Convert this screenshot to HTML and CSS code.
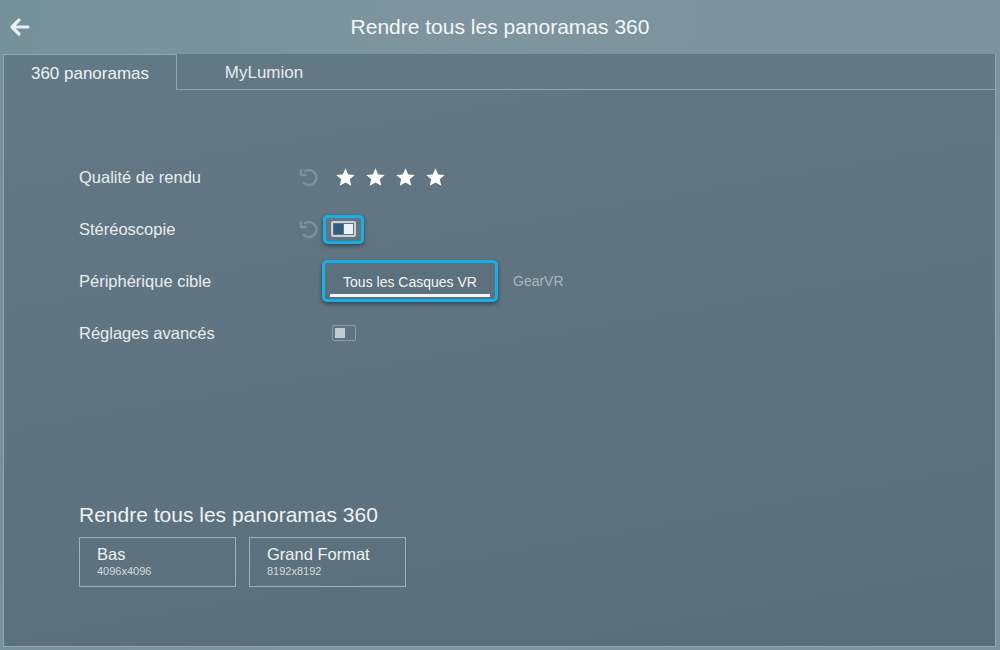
FILE: index.html
```html
<!DOCTYPE html>
<html lang="fr">
<head>
    <meta charset="UTF-8">
    <title>Rendre tous les panoramas 360</title>
    <link rel="stylesheet" href="styles.css">
</head>
<body>
    <header class="topbar">
        <button class="back" type="button" aria-label="Retour">
            <svg width="22" height="20" viewBox="0 0 22 20">
                <path d="M20 10H4M11 3L4 10L11 17" fill="none" stroke="#e9eef0" stroke-width="3.2" stroke-linecap="round" stroke-linejoin="round"/>
            </svg>
        </button>
        <h1>Rendre tous les panoramas 360</h1>
    </header>

    <nav class="tabs">
        <div class="tab active">360 panoramas</div>
        <div class="tab">MyLumion</div>
        <div class="tab-fill"></div>
    </nav>

    <main class="panel">
        <div class="settings">
            <div class="row">
                <span class="label">Qualité de rendu</span>
                <span class="reset">
                    <svg width="22" height="22" viewBox="0 0 24 24"><path d="M6.6 6.4A8.2 8.2 0 1 1 5.6 17.8" fill="none" stroke="#7d909b" stroke-width="2.8"/><path d="M3.2 3.6V9.8H9.4" fill="none" stroke="#7d909b" stroke-width="2.8"/></svg>
                </span>
                <div class="stars">
                    <svg class="star" viewBox="0 0 24 24"><path d="M12 1.5l3.1 7 7.4.6-5.6 4.9 1.7 7.5L12 17.6l-6.6 3.9 1.7-7.5L1.5 9.1l7.4-.6z"/></svg>
                    <svg class="star" viewBox="0 0 24 24"><path d="M12 1.5l3.1 7 7.4.6-5.6 4.9 1.7 7.5L12 17.6l-6.6 3.9 1.7-7.5L1.5 9.1l7.4-.6z"/></svg>
                    <svg class="star" viewBox="0 0 24 24"><path d="M12 1.5l3.1 7 7.4.6-5.6 4.9 1.7 7.5L12 17.6l-6.6 3.9 1.7-7.5L1.5 9.1l7.4-.6z"/></svg>
                    <svg class="star" viewBox="0 0 24 24"><path d="M12 1.5l3.1 7 7.4.6-5.6 4.9 1.7 7.5L12 17.6l-6.6 3.9 1.7-7.5L1.5 9.1l7.4-.6z"/></svg>
                </div>
            </div>

            <div class="row">
                <span class="label">Stéréoscopie</span>
                <span class="reset">
                    <svg width="22" height="22" viewBox="0 0 24 24"><path d="M6.6 6.4A8.2 8.2 0 1 1 5.6 17.8" fill="none" stroke="#7d909b" stroke-width="2.8"/><path d="M3.2 3.6V9.8H9.4" fill="none" stroke="#7d909b" stroke-width="2.8"/></svg>
                </span>
                <div class="focus toggle-focus">
                    <div class="toggle on">
                        <span class="half dark"></span>
                        <span class="half light"></span>
                    </div>
                </div>
            </div>

            <div class="row">
                <span class="label">Périphérique cible</span>
                <span class="reset"></span>
                <div class="focus choice-focus">
                    <span class="choice">Tous les Casques VR</span>
                </div>
                <span class="choice-other">GearVR</span>
            </div>

            <div class="row">
                <span class="label">Réglages avancés</span>
                <span class="reset"></span>
                <div class="toggle off">
                    <span class="knob"></span>
                </div>
            </div>
        </div>

        <section class="render">
            <h2>Rendre tous les panoramas 360</h2>
            <div class="render-buttons">
                <button class="render-btn" type="button">
                    <span class="render-title">Bas</span>
                    <span class="render-size">4096x4096</span>
                </button>
                <button class="render-btn" type="button">
                    <span class="render-title">Grand Format</span>
                    <span class="render-size">8192x8192</span>
                </button>
            </div>
        </section>
    </main>
</body>
</html>
```

FILE: styles.css
```css
body {
    margin: 0;
    height: 650px;
    overflow: hidden;
    font-family: "Liberation Sans", Arial, sans-serif;
    color: #eef2f3;
    background: linear-gradient(100deg, #76909a 0%, #7e959f 40%, #7c939e 100%);
}
.topbar {
    height: 54px;
    display: flex;
    align-items: center;
    justify-content: center;
    position: relative;
}
.topbar h1 {
    margin: 0;
    font-size: 21px;
    font-weight: normal;
    color: #f4f7f8;
}
.back {
    position: absolute;
    left: 8px;
    top: 17px;
    background: none;
    border: none;
    padding: 0;
    display: flex;
}
.tabs {
    display: flex;
    height: 36px;
    margin: 0 4px 0 3px;
    box-sizing: border-box;
}
.tab {
    width: 174px;
    box-sizing: border-box;
    display: flex;
    align-items: center;
    justify-content: center;
    font-size: 17px;
    padding-top: 2px;
    color: #e6ebee;
    background: #627884;
    border-bottom: 1px solid #93a6b0;
}
.tab.active {
    border: 1px solid #93a6b0;
    border-bottom: none;
    color: #eef2f4;
}
.tab-fill {
    flex: 1;
    background: #627884;
    border-bottom: 1px solid #93a6b0;
    border-right: 1px solid #93a6b0;
}
.panel {
    height: 557px;
    margin: 0 4px 0 3px;
    box-sizing: border-box;
    border: 1px solid #93a6b0;
    border-top: none;
    padding: 61px 0 0 75px;
    background: linear-gradient(170deg, #637884 0%, #5e737f 55%, #5a6e7a 100%);
}
.row {
    height: 52px;
    display: flex;
    align-items: center;
}
.label {
    width: 221px;
    font-size: 16.5px;
    color: #e8edef;
}
.reset {
    width: 22px;
    display: flex;
    align-items: center;
    margin-left: -2px;
    margin-right: 2px;
}
.stars {
    display: flex;
    gap: 9px;
    margin-left: 13px;
}
.star {
    width: 21px;
    height: 21px;
    fill: #ffffff;
}
.focus {
    border: 3px solid #18aee6;
    border-radius: 5px;
    box-shadow: 0 2px 4px rgba(20, 35, 45, 0.6);
    box-sizing: border-box;
    display: flex;
    align-items: center;
}
.toggle-focus {
    width: 41px;
    height: 29px;
    padding-left: 5px;
    margin-left: 1px;
}
.toggle {
    width: 25px;
    height: 16px;
    box-sizing: border-box;
    border-radius: 2px;
    display: flex;
    padding: 1px;
    gap: 1px;
}
.toggle.on {
    border: 2px solid #c9d2d6;
}
.half {
    flex: 1;
}
.half.dark {
    background: #2d5f85;
}
.half.light {
    background: #eef2f4;
}
.toggle.off {
    margin-left: 10px;
    width: 24px;
    padding: 2px;
    border: 1.5px solid #8c9ea8;
    align-items: center;
}
.knob {
    width: 10px;
    height: 10px;
    background: #c3cbd0;
}
.choice-focus {
    width: 176px;
    height: 42px;
    justify-content: center;
    background: #5c717d;
}
.choice {
    width: 160px;
    box-sizing: border-box;
    padding: 4px 0 4px;
    text-align: center;
    font-size: 14px;
    color: #f2f5f6;
    border-bottom: 3px solid #f4f6f7;
    margin-top: 5px;
}
.choice-other {
    margin-left: 15px;
    font-size: 14px;
    color: #a9b6bd;
}
.render {
    margin-top: 144px;
}
.render h2 {
    margin: 0;
    font-size: 21px;
    line-height: 24px;
    font-weight: normal;
    color: #eef2f3;
}
.render-buttons {
    display: flex;
    gap: 13px;
    margin-top: 10px;
}
.render-btn {
    width: 157px;
    height: 50px;
    box-sizing: border-box;
    border: 1px solid #9fb0b9;
    background: transparent;
    padding: 7px 0 0 17px;
    display: flex;
    flex-direction: column;
    align-items: flex-start;
    font-family: inherit;
    text-align: left;
}
.render-title {
    font-size: 16.5px;
    line-height: 19px;
    color: #eef2f3;
}
.render-size {
    font-size: 11px;
    line-height: 15px;
    color: #d3dbdf;
}
```
